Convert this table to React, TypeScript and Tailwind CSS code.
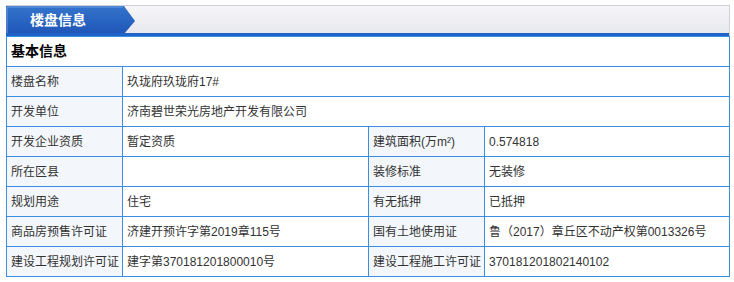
import React from "react";

const font = { fontFamily: '"Liberation Sans", "Noto Sans CJK SC", sans-serif' };

type Row = { label: string; value: string; label2?: string; value2?: string };

const rows: Row[] = [
  { label: "楼盘名称", value: "玖珑府玖珑府17#" },
  { label: "开发单位", value: "济南碧世荣光房地产开发有限公司" },
  { label: "开发企业资质", value: "暂定资质", label2: "建筑面积(万m²)", value2: "0.574818" },
  { label: "所在区县", value: "", label2: "装修标准", value2: "无装修" },
  { label: "规划用途", value: "住宅", label2: "有无抵押", value2: "已抵押" },
  { label: "商品房预售许可证", value: "济建开预许字第2019章115号", label2: "国有土地使用证", value2: "鲁（2017）章丘区不动产权第0013326号" },
  { label: "建设工程规划许可证", value: "建字第370181201800010号", label2: "建设工程施工许可证", value2: "370181201802140102" },
];

const TabHeader = () => (
  <div className="relative flex h-[31px] border-t border-r border-[#cfcfdc] bg-gradient-to-b from-[#f6f6f8] to-[#e6e6ee]">
    <div className="relative h-[28px] w-[130px]">
      <svg className="absolute left-0 top-0" width="130" height="28" viewBox="0 0 130 28">
        <defs>
          <linearGradient id="tabg" x1="0" y1="0" x2="0" y2="1">
            <stop offset="0" stopColor="#3474cc" />
            <stop offset="1" stopColor="#1f56b8" />
          </linearGradient>
        </defs>
        <path d="M0 0 H118 L129 15 L118 28 H0 Z" fill="url(#tabg)" />
        <path d="M1 1 H117 M1 1 V28" stroke="#6d9be0" strokeWidth="1" fill="none" />
      </svg>
      <span className="absolute left-[24px] top-[5px] text-[14px] font-bold text-white leading-[18px]">楼盘信息</span>
    </div>
    <div className="absolute bottom-0 left-0 right-0 h-[3px] bg-[#1f63c9]" />
  </div>
);

const Label = ({ children }: { children: React.ReactNode }) => (
  <td className="h-[30px] border border-[#3b8ee2] bg-[#f3f7fb] pl-[4px] text-[12px] text-[#333] whitespace-nowrap">{children}</td>
);

const Value = ({ children, span }: { children: React.ReactNode; span?: number }) => (
  <td colSpan={span} className="h-[30px] border border-[#3b8ee2] bg-white pl-[4px] text-[12px] text-[#333] whitespace-nowrap">{children}</td>
);

export default function App() {
  return (
    <div className="min-h-[282px] bg-white pt-[5px] pl-[6px]" style={font}>
      <div className="w-[724px]">
        <TabHeader />
        <table className="w-[723px] table-fixed border-collapse">
          <colgroup>
            <col className="w-[116px]" />
            <col className="w-[246px]" />
            <col className="w-[116px]" />
            <col className="w-[245px]" />
          </colgroup>
          <tbody>
            <tr>
              <td colSpan={4} className="h-[30px] border border-[#3b8ee2] pl-[4px] text-[14px] font-bold text-black">基本信息</td>
            </tr>
            {rows.map((r) =>
              r.label2 === undefined ? (
                <tr key={r.label}>
                  <Label>{r.label}</Label>
                  <Value span={3}>{r.value}</Value>
                </tr>
              ) : (
                <tr key={r.label}>
                  <Label>{r.label}</Label>
                  <Value>{r.value}</Value>
                  <Label>{r.label2}</Label>
                  <Value>{r.value2}</Value>
                </tr>
              )
            )}
          </tbody>
        </table>
      </div>
    </div>
  );
}
